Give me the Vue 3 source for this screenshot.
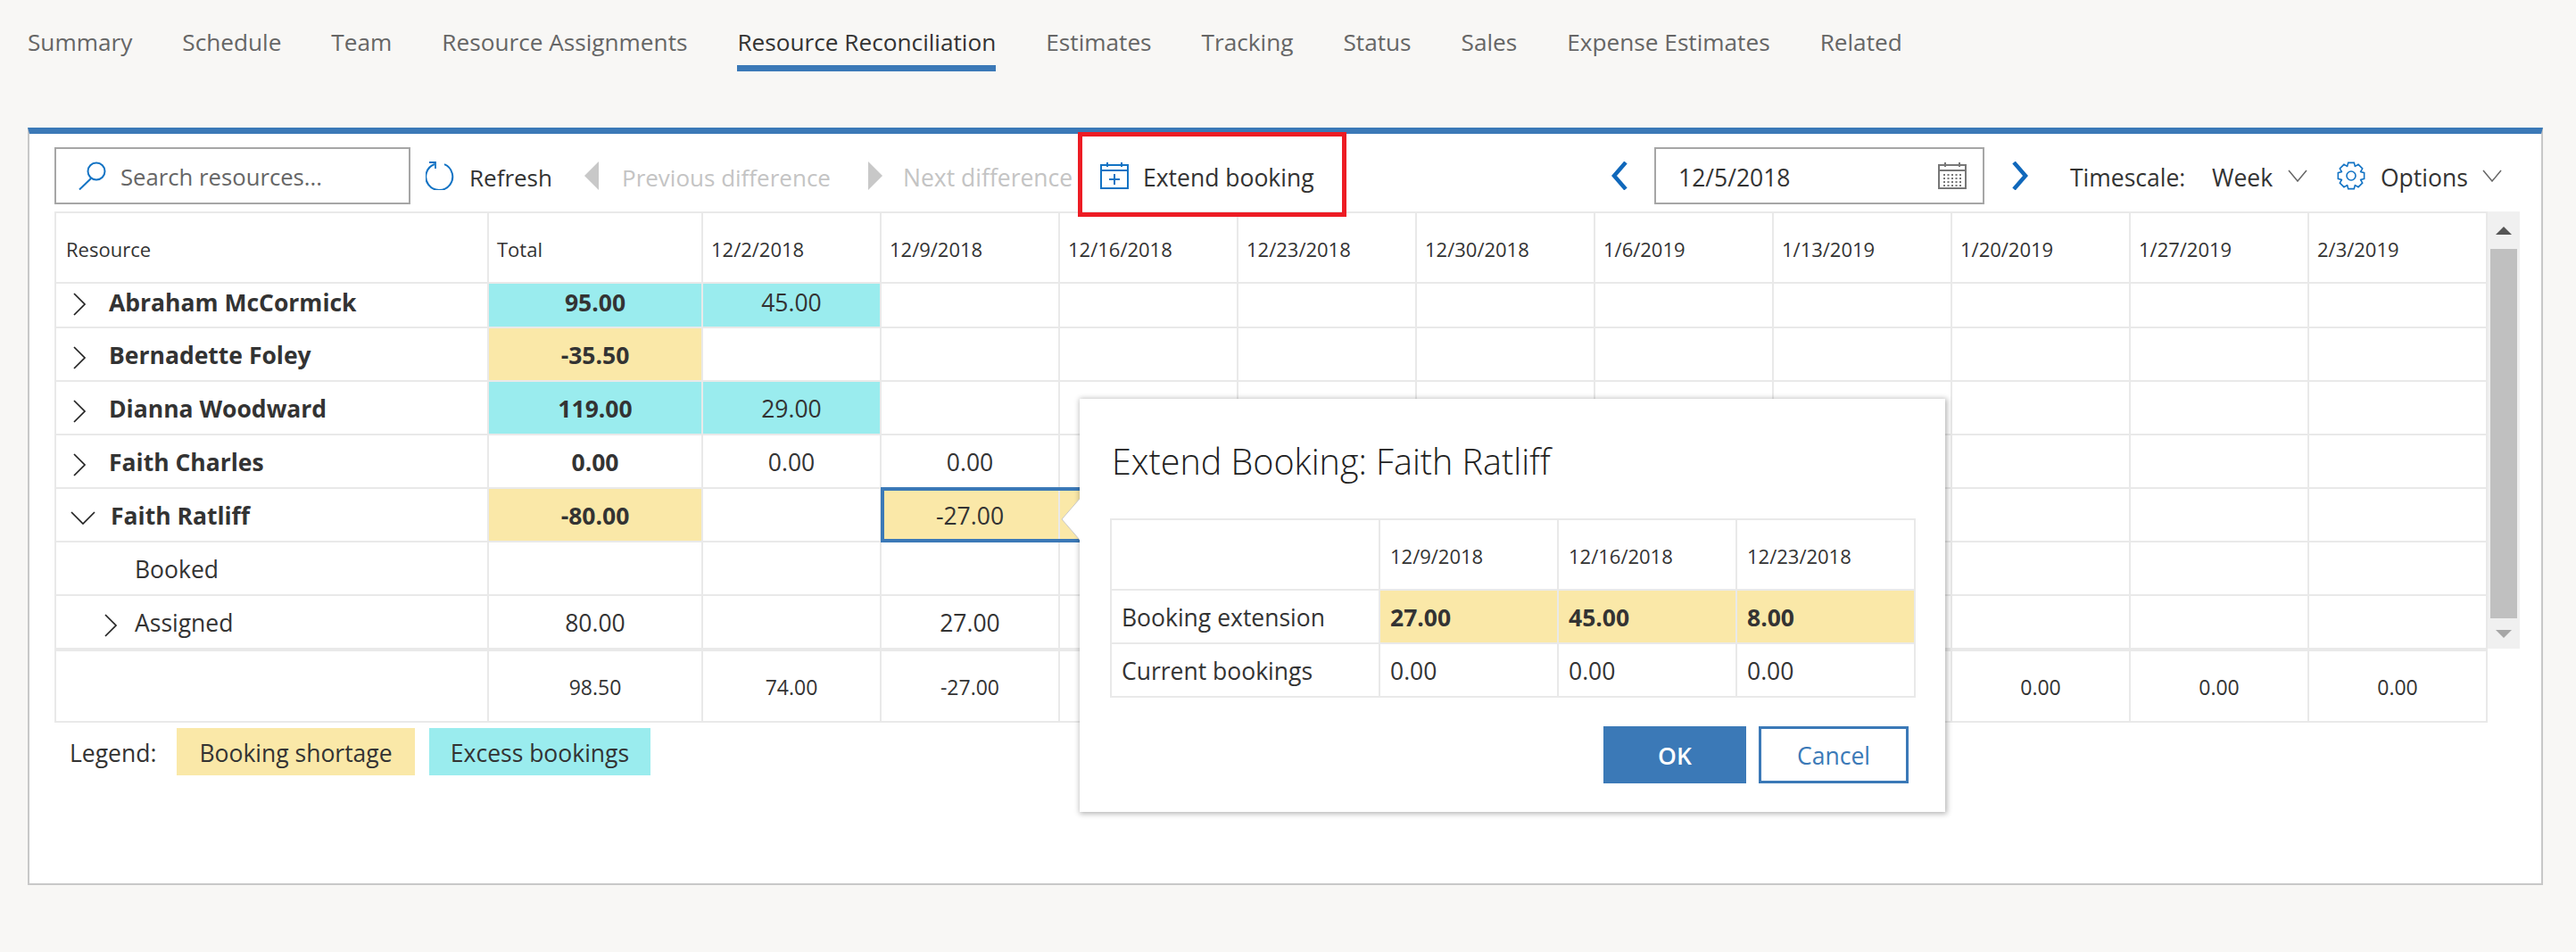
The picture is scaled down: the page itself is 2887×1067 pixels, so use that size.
<template>
  <div class="page">
    <nav class="tabs">
      <div v-for="tab in tabs" :key="tab" class="tab" :class="{ active: tab === 'Resource Reconciliation' }">{{ tab }}</div>
    </nav>

    <section class="panel">
      <div class="toolbar">
        <div class="input search-box">
          <svg class="icon" viewBox="0 0 32 32" fill="none" stroke="#1273c4" stroke-width="2">
            <circle cx="21" cy="11" r="9.5" />
            <path d="M15 19 L2 31.5" />
          </svg>
          <span class="placeholder">Search resources...</span>
        </div>
        <div class="tool refresh">
          <svg class="icon" viewBox="0 0 32 32" fill="none" stroke="#1273c4" stroke-width="2">
            <path d="M21 3.2 A15 15 0 1 1 10 3" />
            <path d="M4 1 H11 V8" stroke-width="1.8" />
          </svg>
          <span>Refresh</span>
        </div>
        <div class="tool prev disabled">
          <svg class="tri" viewBox="0 0 16 32"><path d="M16 0 V32 L0 16 Z" fill="#c8c8c8" /></svg>
          <span>Previous difference</span>
        </div>
        <div class="tool next disabled">
          <svg class="tri" viewBox="0 0 16 32"><path d="M0 0 V32 L16 16 Z" fill="#c8c8c8" /></svg>
          <span>Next difference</span>
        </div>
        <div class="tool extend">
          <svg class="icon" viewBox="0 0 32 30" fill="none" stroke="#1273c4" stroke-width="2">
            <rect x="1" y="3" width="30" height="26" />
            <path d="M1 9 H31 M8 0 V5 M24 0 V5 M16 13 V25 M10 19 H22" />
          </svg>
          <span>Extend booking</span>
          <div class="callout"></div>
        </div>

        <div class="right-tools">
          <svg class="chev-nav" viewBox="0 0 18 32"><path d="M16 1 L3 16 L16 31" fill="none" stroke="#1068bb" stroke-width="4.5" /></svg>
          <div class="input date-box">
            <span>12/5/2018</span>
            <svg class="icon" viewBox="0 0 32 30" fill="none" stroke="#777" stroke-width="2">
              <rect x="1" y="3" width="30" height="26" />
              <path d="M1 9 H31 M8 0 V5 M24 0 V5" />
              <path d="M6 14 H26 M6 18 H26 M6 22 H26 M6 26 H26" stroke-width="2" stroke-dasharray="2 2.5" />
            </svg>
          </div>
          <svg class="chev-nav next-nav" viewBox="0 0 18 32"><path d="M2 1 L15 16 L2 31" fill="none" stroke="#1068bb" stroke-width="4.5" /></svg>
          <span class="timescale">Timescale:</span>
          <span class="week">Week</span>
          <svg class="caret" viewBox="0 0 22 14"><path d="M1 1 L11 13 L21 1" fill="none" stroke="#666" stroke-width="1.5" /></svg>
          <svg class="gear" viewBox="0 0 32 32" fill="none" stroke="#1273c4" stroke-width="1.6">
            <path :d="gearPath" />
            <circle cx="16" cy="16" r="5" />
          </svg>
          <span class="options">Options</span>
          <svg class="caret" viewBox="0 0 22 14"><path d="M1 1 L11 13 L21 1" fill="none" stroke="#666" stroke-width="1.5" /></svg>
        </div>
      </div>

      <div class="grid-top">
        <table class="grid">
          <colgroup>
            <col class="c-name" /><col class="c-total" />
            <col v-for="d in dates" :key="d" class="c-date" />
          </colgroup>
          <thead>
            <tr class="head">
              <th>Resource</th>
              <th>Total</th>
              <th v-for="d in dates" :key="d">{{ d }}</th>
            </tr>
          </thead>
          <tbody>
            <tr v-for="(row, i) in rows" :key="row.name" :class="i === 0 ? 'first' : ''">
              <td class="name" :class="[row.level ? 'sub' : 'top']">
                <svg v-if="row.arrow === 'right'" class="arrow" viewBox="0 0 16 26"><path d="M2 1 L14 13 L2 25" fill="none" stroke="#222" stroke-width="1.7" /></svg>
                <svg v-if="row.arrow === 'down'" class="arrow-down" viewBox="0 0 28 15"><path d="M1 1 L14 14 L27 1" fill="none" stroke="#222" stroke-width="1.7" /></svg>
                <span class="label" :class="{ plain: !row.arrow }">{{ row.name }}</span>
              </td>
              <td class="num total" :class="[row.totalTone, { bold: !row.level }]">{{ row.total }}</td>
              <td v-for="(d, c) in dates" :key="d" class="num" :class="cellClass(row, c)">{{ row.cells[c] }}</td>
            </tr>
          </tbody>
        </table>
        <div class="scrollbar">
          <div class="scroll-btn"><span class="up"></span></div>
          <div class="thumb"></div>
          <div class="scroll-btn down-btn"><span class="down"></span></div>
        </div>
      </div>

      <table class="grid foot">
        <colgroup>
          <col class="c-name" /><col class="c-total" />
          <col v-for="d in dates" :key="d" class="c-date" />
        </colgroup>
        <tbody>
          <tr>
            <td></td>
            <td v-for="(v, i) in footer" :key="i" class="num">{{ v }}</td>
          </tr>
        </tbody>
      </table>

      <div class="legend">
        <span class="legend-label">Legend:</span>
        <span class="chip yellow">Booking shortage</span>
        <span class="chip cyan">Excess bookings</span>
      </div>

      <svg class="notch" viewBox="0 0 22 48"><path d="M21 1 L1 24 L21 47" fill="#fff" stroke="#c9c9c9" stroke-width="1" /></svg>
      <div class="dialog">
        <h2>Extend Booking: Faith Ratliff</h2>
        <table class="mini">
          <colgroup><col class="m-name" /><col class="m-date" /><col class="m-date" /><col class="m-date" /></colgroup>
          <tbody>
            <tr class="mini-head">
              <td></td>
              <td v-for="d in dates.slice(1, 4)" :key="d">{{ d }}</td>
            </tr>
            <tr>
              <td class="mini-label">Booking extension</td>
              <td v-for="v in ['27.00', '45.00', '8.00']" :key="v" class="yellow bold">{{ v }}</td>
            </tr>
            <tr>
              <td class="mini-label">Current bookings</td>
              <td v-for="n in 3" :key="n">0.00</td>
            </tr>
          </tbody>
        </table>
        <div class="actions">
          <button class="btn ok">OK</button>
          <button class="btn cancel">Cancel</button>
        </div>
      </div>
    </section>
  </div>
</template>

<script setup>
const tabs = [
  'Summary', 'Schedule', 'Team', 'Resource Assignments', 'Resource Reconciliation',
  'Estimates', 'Tracking', 'Status', 'Sales', 'Expense Estimates', 'Related'
]

const dates = [
  '12/2/2018', '12/9/2018', '12/16/2018', '12/23/2018', '12/30/2018',
  '1/6/2019', '1/13/2019', '1/20/2019', '1/27/2019', '2/3/2019'
]

const rows = [
  { name: 'Abraham McCormick', arrow: 'right', total: '95.00', totalTone: 'cyan', cells: ['45.00'], tones: ['cyan'] },
  { name: 'Bernadette Foley', arrow: 'right', total: '-35.50', totalTone: 'yellow', cells: [] },
  { name: 'Dianna Woodward', arrow: 'right', total: '119.00', totalTone: 'cyan', cells: ['29.00'], tones: ['cyan'] },
  { name: 'Faith Charles', arrow: 'right', total: '0.00', cells: ['0.00', '0.00'] },
  { name: 'Faith Ratliff', arrow: 'down', total: '-80.00', totalTone: 'yellow', cells: ['', '-27.00'], tones: ['', 'sel-a', 'sel-b'] },
  { name: 'Booked', level: 1, total: '', cells: [] },
  { name: 'Assigned', level: 1, arrow: 'right', total: '80.00', cells: ['', '27.00'] }
]

// the cells under the dialog stay empty
const footer = ['98.50', '74.00', '-27.00', '', '', '', '', '', '0.00', '0.00', '0.00']

const cellClass = (row, c) => (row.tones ? row.tones[c] : '')

// 8 toothed gear outline
const gearPath = (() => {
  const pts = []
  for (let i = 0; i < 8; i++) {
    const a = (i * Math.PI) / 4
    const steps = [[-0.39, 11.5], [-0.22, 15], [0.22, 15], [0.39, 11.5]]
    steps.forEach(([da, r]) => {
      pts.push(`${(16 + r * Math.sin(a + da)).toFixed(2)} ${(16 - r * Math.cos(a + da)).toFixed(2)}`)
    })
  }
  return 'M' + pts.join(' L') + ' Z'
})()
</script>

<style>
html, body {
  margin: 0;
  background: #f8f7f5;
}
</style>

<style scoped>
.page {
  height: 1067px;
  overflow: hidden;
  background: #f8f7f5;
  color: #333;
  font-family: "Open Sans", "Liberation Sans", sans-serif;
  font-size: 26.5px;
}

.tabs {
  display: flex;
  gap: 56px;
  padding: 28px 0 0 31px;
  color: #666;
  font-size: 26.2px;
}

.tab {
  line-height: 38px;
  padding-bottom: 7px;
  border-bottom: 7px solid transparent;
}

.tab.active {
  color: #333;
  border-bottom-color: #3b79b7;
}

.panel {
  position: relative;
  box-sizing: border-box;
  width: 2819px;
  height: 849px;
  margin: 63px 0 0 31px;
  padding: 15px 27px 0 28px;
  background: #fff;
  border: 2px solid #c8c8c8;
  border-top: 7px solid #3b79b7;
}

.toolbar {
  display: flex;
  align-items: center;
  height: 64px;
  margin-bottom: 8px;
}

.toolbar span {
  padding-top: 3px;
}

.input {
  box-sizing: border-box;
  display: flex;
  align-items: center;
  height: 64px;
  border: 2px solid #a6a6a6;
}

.search-box {
  width: 399px;
  padding-left: 24px;
  gap: 16px;
  margin-right: 17px;
}

.placeholder {
  color: #666;
  font-size: 25.7px;
}

.icon {
  width: 32px;
  height: 32px;
  flex: none;
}

.tool {
  display: flex;
  align-items: center;
  flex: none;
  white-space: nowrap;
}

.tri {
  width: 16px;
  height: 32px;
  flex: none;
}

.refresh {
  width: 178px;
  gap: 17px;
  font-size: 26px;
}

.prev {
  width: 318px;
  gap: 26px;
  font-size: 26px;
}

.next {
  width: 260px;
  gap: 23px;
}

.disabled {
  color: #c4c4c4;
}

.extend {
  position: relative;
  gap: 16px;
}

.callout {
  position: absolute;
  left: -25px;
  top: -30px;
  width: 291px;
  height: 85px;
  border: 5px solid #ed1c24;
}

.right-tools {
  display: flex;
  align-items: center;
  margin-left: auto;
  margin-right: 17px;
}

.chev-nav {
  width: 18px;
  height: 32px;
  margin-right: 30px;
}

.next-nav {
  margin: 0 47px 0 31px;
}

.date-box {
  width: 370px;
  padding: 0 18px 0 25px;
  justify-content: space-between;
}

.timescale {
  width: 159px;
}

.week {
  width: 85px;
}

.caret {
  width: 22px;
  height: 14px;
}

.gear {
  width: 32px;
  height: 32px;
  margin: 0 17px 0 33px;
}

.options {
  width: 114px;
}

.grid-top {
  display: flex;
  align-items: flex-start;
}

.grid {
  table-layout: fixed;
  border-collapse: collapse;
  width: 2725px;
  flex: none;
}

.c-name {
  width: 485px;
}

.c-total {
  width: 240px;
}

.c-date {
  width: 200px;
}

.grid th,
.grid td {
  border: 2px solid #e9e9e9;
  padding: 2px 0 0;
}

.head th {
  height: 75px;
  padding-left: 11px;
  text-align: left;
  font-size: 22px;
  font-weight: 400;
}

.head th + th {
  padding-left: 9px;
}

.grid tbody tr {
  height: 60px;
}

.grid tbody tr.first {
  height: 50px;
}

.grid tbody tr.first td {
  padding-bottom: 9px;
}

.name {
  white-space: nowrap;
}

.top {
  padding-left: 18px !important;
}

.sub {
  padding-left: 53px !important;
}

.arrow {
  width: 16px;
  height: 26px;
  vertical-align: middle;
}

.arrow-down {
  width: 28px;
  height: 15px;
  margin-left: -2px;
  vertical-align: middle;
}

.top .label {
  font-weight: 700;
  margin-left: 25px;
}

.top .arrow-down + .label {
  margin-left: 17px;
}

.sub .label {
  margin-left: 19px;
}

.sub .label.plain {
  margin-left: 35px;
}

.num {
  text-align: center;
}

.bold {
  font-weight: 700;
}

.yellow {
  background: #fae8a8;
}

.cyan {
  background: #9aecee;
}

.sel-a,
.sel-b {
  position: relative;
  background: #fae8a8;
}

.sel-a::after,
.sel-b::after {
  content: "";
  position: absolute;
  inset: -2px -1px -2px -1px;
  border: solid #3b79b7;
  border-width: 4px 0;
}

.sel-a::after {
  border-left-width: 4px;
}

.scrollbar {
  display: flex;
  flex-direction: column;
  align-items: center;
  width: 36px;
  height: 490px;
  flex: none;
  background: #f0f0f0;
}

.scroll-btn {
  display: flex;
  align-items: center;
  justify-content: center;
  height: 42px;
  flex: none;
}

.down-btn {
  height: 34px;
}

.up {
  border: 9px solid transparent;
  border-top: 0;
  border-bottom: 9px solid #555;
}

.down {
  border: 9px solid transparent;
  border-bottom: 0;
  border-top: 9px solid #a6a6a6;
}

.thumb {
  width: 30px;
  flex: 1;
  background: #c0c0c0;
}

.foot {
  font-size: 23px;
}

.grid.foot tbody tr {
  height: 80px;
}

.legend {
  display: flex;
  align-items: center;
  margin-top: 6px;
  padding-left: 17px;
}

.legend-label {
  width: 120px;
  padding-top: 2px;
}

.chip {
  box-sizing: border-box;
  display: flex;
  align-items: center;
  justify-content: center;
  height: 53px;
  margin-right: 16px;
  padding-top: 2px;
}

.chip.yellow {
  width: 267px;
}

.chip.cyan {
  width: 248px;
}

.notch {
  position: absolute;
  left: 1156px;
  top: 408px;
  width: 22px;
  height: 48px;
  z-index: 3;
}

.dialog {
  position: absolute;
  left: 1177px;
  top: 297px;
  box-sizing: border-box;
  width: 970px;
  height: 463px;
  padding: 45px 0 0 34px;
  background: #fff;
  box-shadow: 1px 1px 6px 1px rgba(0, 0, 0, 0.3);
  z-index: 2;
}

.dialog h2 {
  margin: 0 0 39px 2px;
  font-size: 39.5px;
  font-weight: 300;
  line-height: 50px;
  color: #222;
}

.mini {
  table-layout: fixed;
  border-collapse: collapse;
  width: 902px;
}

.m-name {
  width: 301px;
}

.m-date {
  width: 200px;
}

.mini td {
  height: 56px;
  padding: 2px 0 0 11px;
  border: 2px solid #e9e9e9;
}

.mini-head td {
  height: 75px;
  font-size: 22px;
}

.actions {
  display: flex;
  justify-content: flex-end;
  gap: 14px;
  margin-top: 32px;
  padding-right: 41px;
}

.btn {
  box-sizing: border-box;
  height: 64px;
  padding-top: 3px;
  border: 3px solid #3b79b7;
  font-family: inherit;
  font-size: 26.5px;
}

.ok {
  width: 160px;
  background: #3b79b7;
  color: #fff;
  font-weight: 600;
}

.cancel {
  width: 168px;
  background: #fff;
  color: #3b79b7;
}
</style>
